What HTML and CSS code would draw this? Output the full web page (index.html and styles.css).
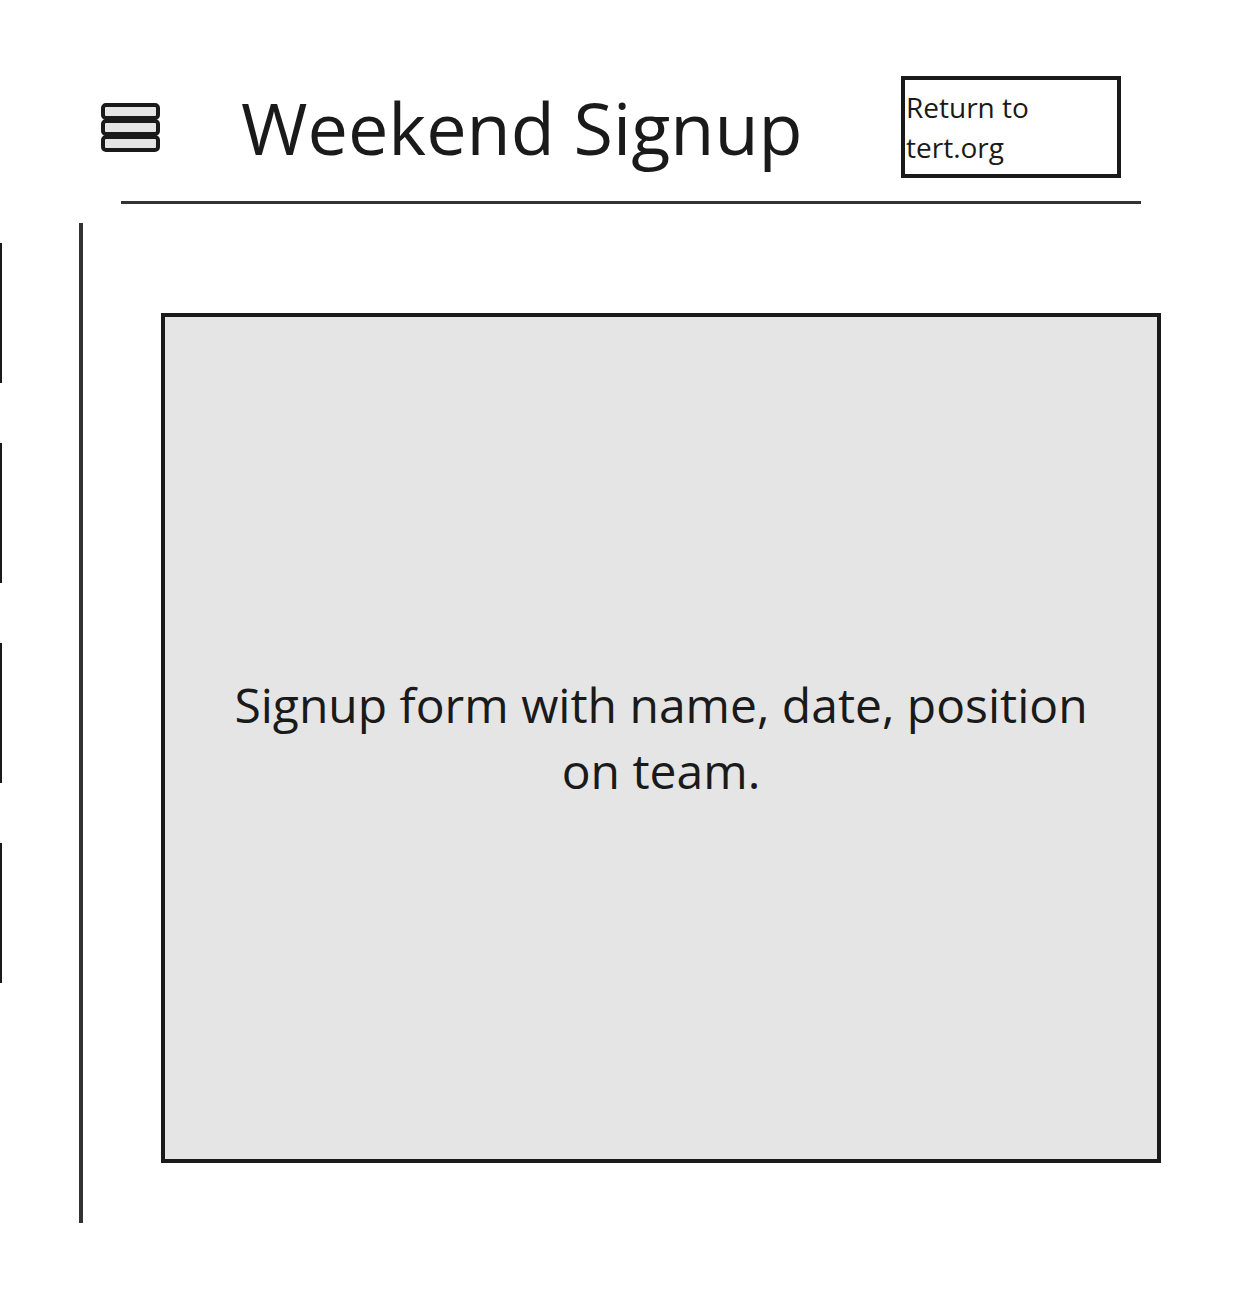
FILE: index.html
```html
<!DOCTYPE html>
<html lang="en">
<head>
    <meta charset="UTF-8">
    <meta name="viewport" content="width=device-width, initial-scale=1.0">
    <title>Weekend Signup</title>
    <link rel="stylesheet" href="styles.css">
</head>
<body>
    <header class="topbar">
        <button class="menu-btn" aria-label="Menu">
            <svg width="59" height="49" viewBox="0 0 59 49">
                <rect x="2" y="2" width="55" height="13" rx="3" />
                <rect x="2" y="18" width="55" height="13" rx="3" />
                <rect x="2" y="34" width="55" height="13" rx="3" />
            </svg>
        </button>
        <h1 class="title">Weekend Signup</h1>
        <a class="return-link" href="#">Return to tert.org</a>
    </header>

    <div class="rule"></div>

    <main class="main">
        <!-- tabs sticking out from the left edge -->
        <nav class="side-tabs">
            <span class="tab"></span>
            <span class="tab"></span>
            <span class="tab"></span>
            <span class="tab"></span>
        </nav>
        <div class="divider"></div>
        <section class="content">
            <div class="form-box">
                <p>Signup form with name, date, position on team.</p>
            </div>
        </section>
    </main>
</body>
</html>
```

FILE: styles.css
```css
body {
    margin: 0;
    font-family: "Open Sans", "Liberation Sans", sans-serif;
    color: #1a1a1a;
    background: #fff;
}

.topbar {
    display: flex;
    align-items: center;
    box-sizing: border-box;
    width: 1121px;
    padding: 76px 0 0 101px;
}
.menu-btn {
    width: 59px;
    height: 49px;
    padding: 0;
    border: 0;
    background: none;
    cursor: pointer;
}
.menu-btn svg {
    display: block;
}
.menu-btn rect {
    fill: #e5e5e5;
    stroke: #1a1a1a;
    stroke-width: 4;
}
.title {
    margin: 0 0 0 81px;
    font-size: 72px;
    font-weight: 400;
    line-height: 1;
}
.return-link {
    margin-left: auto;
    box-sizing: border-box;
    width: 220px;
    height: 102px;
    border: 4px solid #1a1a1a;
    padding: 7px 0 0 1px;
    font-size: 28px;
    line-height: 40px;
    color: #1a1a1a;
    text-decoration: none;
}

.rule {
    width: 1020px;
    height: 3px;
    margin: 23px 0 0 121px;
    background: #333;
}

.main {
    display: flex;
    margin-top: 19px;
}
.side-tabs {
    display: flex;
    flex-direction: column;
    gap: 60px;
    width: 2px;
    padding-top: 20px;
}
.tab {
    display: block;
    width: 2px;
    height: 140px;
    background: #1a1a1a;
}
.divider {
    width: 4px;
    height: 1000px;
    margin-left: 77px;
    background: #333;
}
.content {
    padding: 90px 0 0 78px;
}
.form-box {
    display: flex;
    align-items: center;
    justify-content: center;
    box-sizing: border-box;
    width: 1000px;
    height: 850px;
    padding: 0 60px;
    border: 4px solid #1a1a1a;
    background: #e5e5e5;
}
.form-box p {
    margin: 0;
    font-size: 48px;
    line-height: 66px;
    text-align: center;
}
```
